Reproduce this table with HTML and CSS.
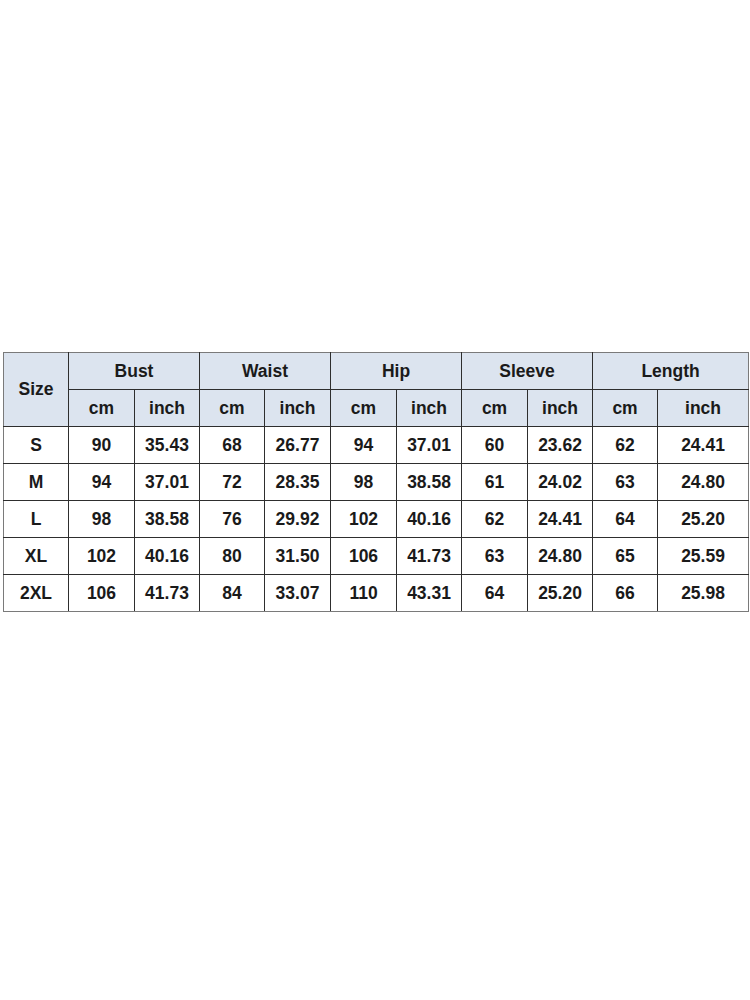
FILE: index.html
```html
<!DOCTYPE html>
<html>
<head>
<meta charset="utf-8">
<link rel="stylesheet" href="styles.css">
</head>
<body>
<div class="page">
<table class="size-table">
  <colgroup>
    <col class="c-size">
    <col class="c66"><col class="c65">
    <col class="c65"><col class="c66">
    <col class="c66"><col class="c65">
    <col class="c66"><col class="c65">
    <col class="c65"><col class="c-last">
  </colgroup>
  <thead>
    <tr>
      <th rowspan="2">Size</th>
      <th colspan="2">Bust</th>
      <th colspan="2">Waist</th>
      <th colspan="2">Hip</th>
      <th colspan="2">Sleeve</th>
      <th colspan="2">Length</th>
    </tr>
    <tr>
      <th>cm</th><th>inch</th>
      <th>cm</th><th>inch</th>
      <th>cm</th><th>inch</th>
      <th>cm</th><th>inch</th>
      <th>cm</th><th>inch</th>
    </tr>
  </thead>
  <tbody>
    <tr><td>S</td><td>90</td><td>35.43</td><td>68</td><td>26.77</td><td>94</td><td>37.01</td><td>60</td><td>23.62</td><td>62</td><td>24.41</td></tr>
    <tr><td>M</td><td>94</td><td>37.01</td><td>72</td><td>28.35</td><td>98</td><td>38.58</td><td>61</td><td>24.02</td><td>63</td><td>24.80</td></tr>
    <tr><td>L</td><td>98</td><td>38.58</td><td>76</td><td>29.92</td><td>102</td><td>40.16</td><td>62</td><td>24.41</td><td>64</td><td>25.20</td></tr>
    <tr><td>XL</td><td>102</td><td>40.16</td><td>80</td><td>31.50</td><td>106</td><td>41.73</td><td>63</td><td>24.80</td><td>65</td><td>25.59</td></tr>
    <tr><td>2XL</td><td>106</td><td>41.73</td><td>84</td><td>33.07</td><td>110</td><td>43.31</td><td>64</td><td>25.20</td><td>66</td><td>25.98</td></tr>
  </tbody>
</table>
</div>
</body>
</html>
```
FILE: styles.css
```css
html, body {
  margin: 0;
  padding: 0;
  background: #ffffff;
}
.page {
  width: 750px;
  height: 1000px;
  padding-top: 352px;
  padding-left: 3px;
  box-sizing: border-box;
}
.size-table {
  border-collapse: collapse;
  table-layout: fixed;
  width: 746px;
  font-family: "Liberation Sans", Arial, sans-serif;
  font-weight: bold;
  font-size: 17.5px;
  color: #1a1a1a;
}
.c-size { width: 65px; }
.c65 { width: 65px; }
.c66 { width: 66px; }
.c-last { width: 91px; }
.size-table th,
.size-table td {
  border: 1px solid #2e2e2e;
  height: 37px;
  padding: 0;
  text-align: center;
  vertical-align: middle;
  box-sizing: border-box;
}
.size-table th {
  background: #dce4ef;
  font-weight: bold;
}
.size-table tr > :first-child {
  border-left-color: #7a7a7a;
}
.size-table tr > :last-child {
  border-right-color: #7a7a7a;
}
.size-table thead tr:first-child th {
  border-top-color: #7a7a7a;
}
.size-table thead tr:first-child th:first-child {
  border-right-color: #2e2e2e;
}
.size-table tbody tr:last-child td {
  border-bottom-color: #7a7a7a;
}
```
